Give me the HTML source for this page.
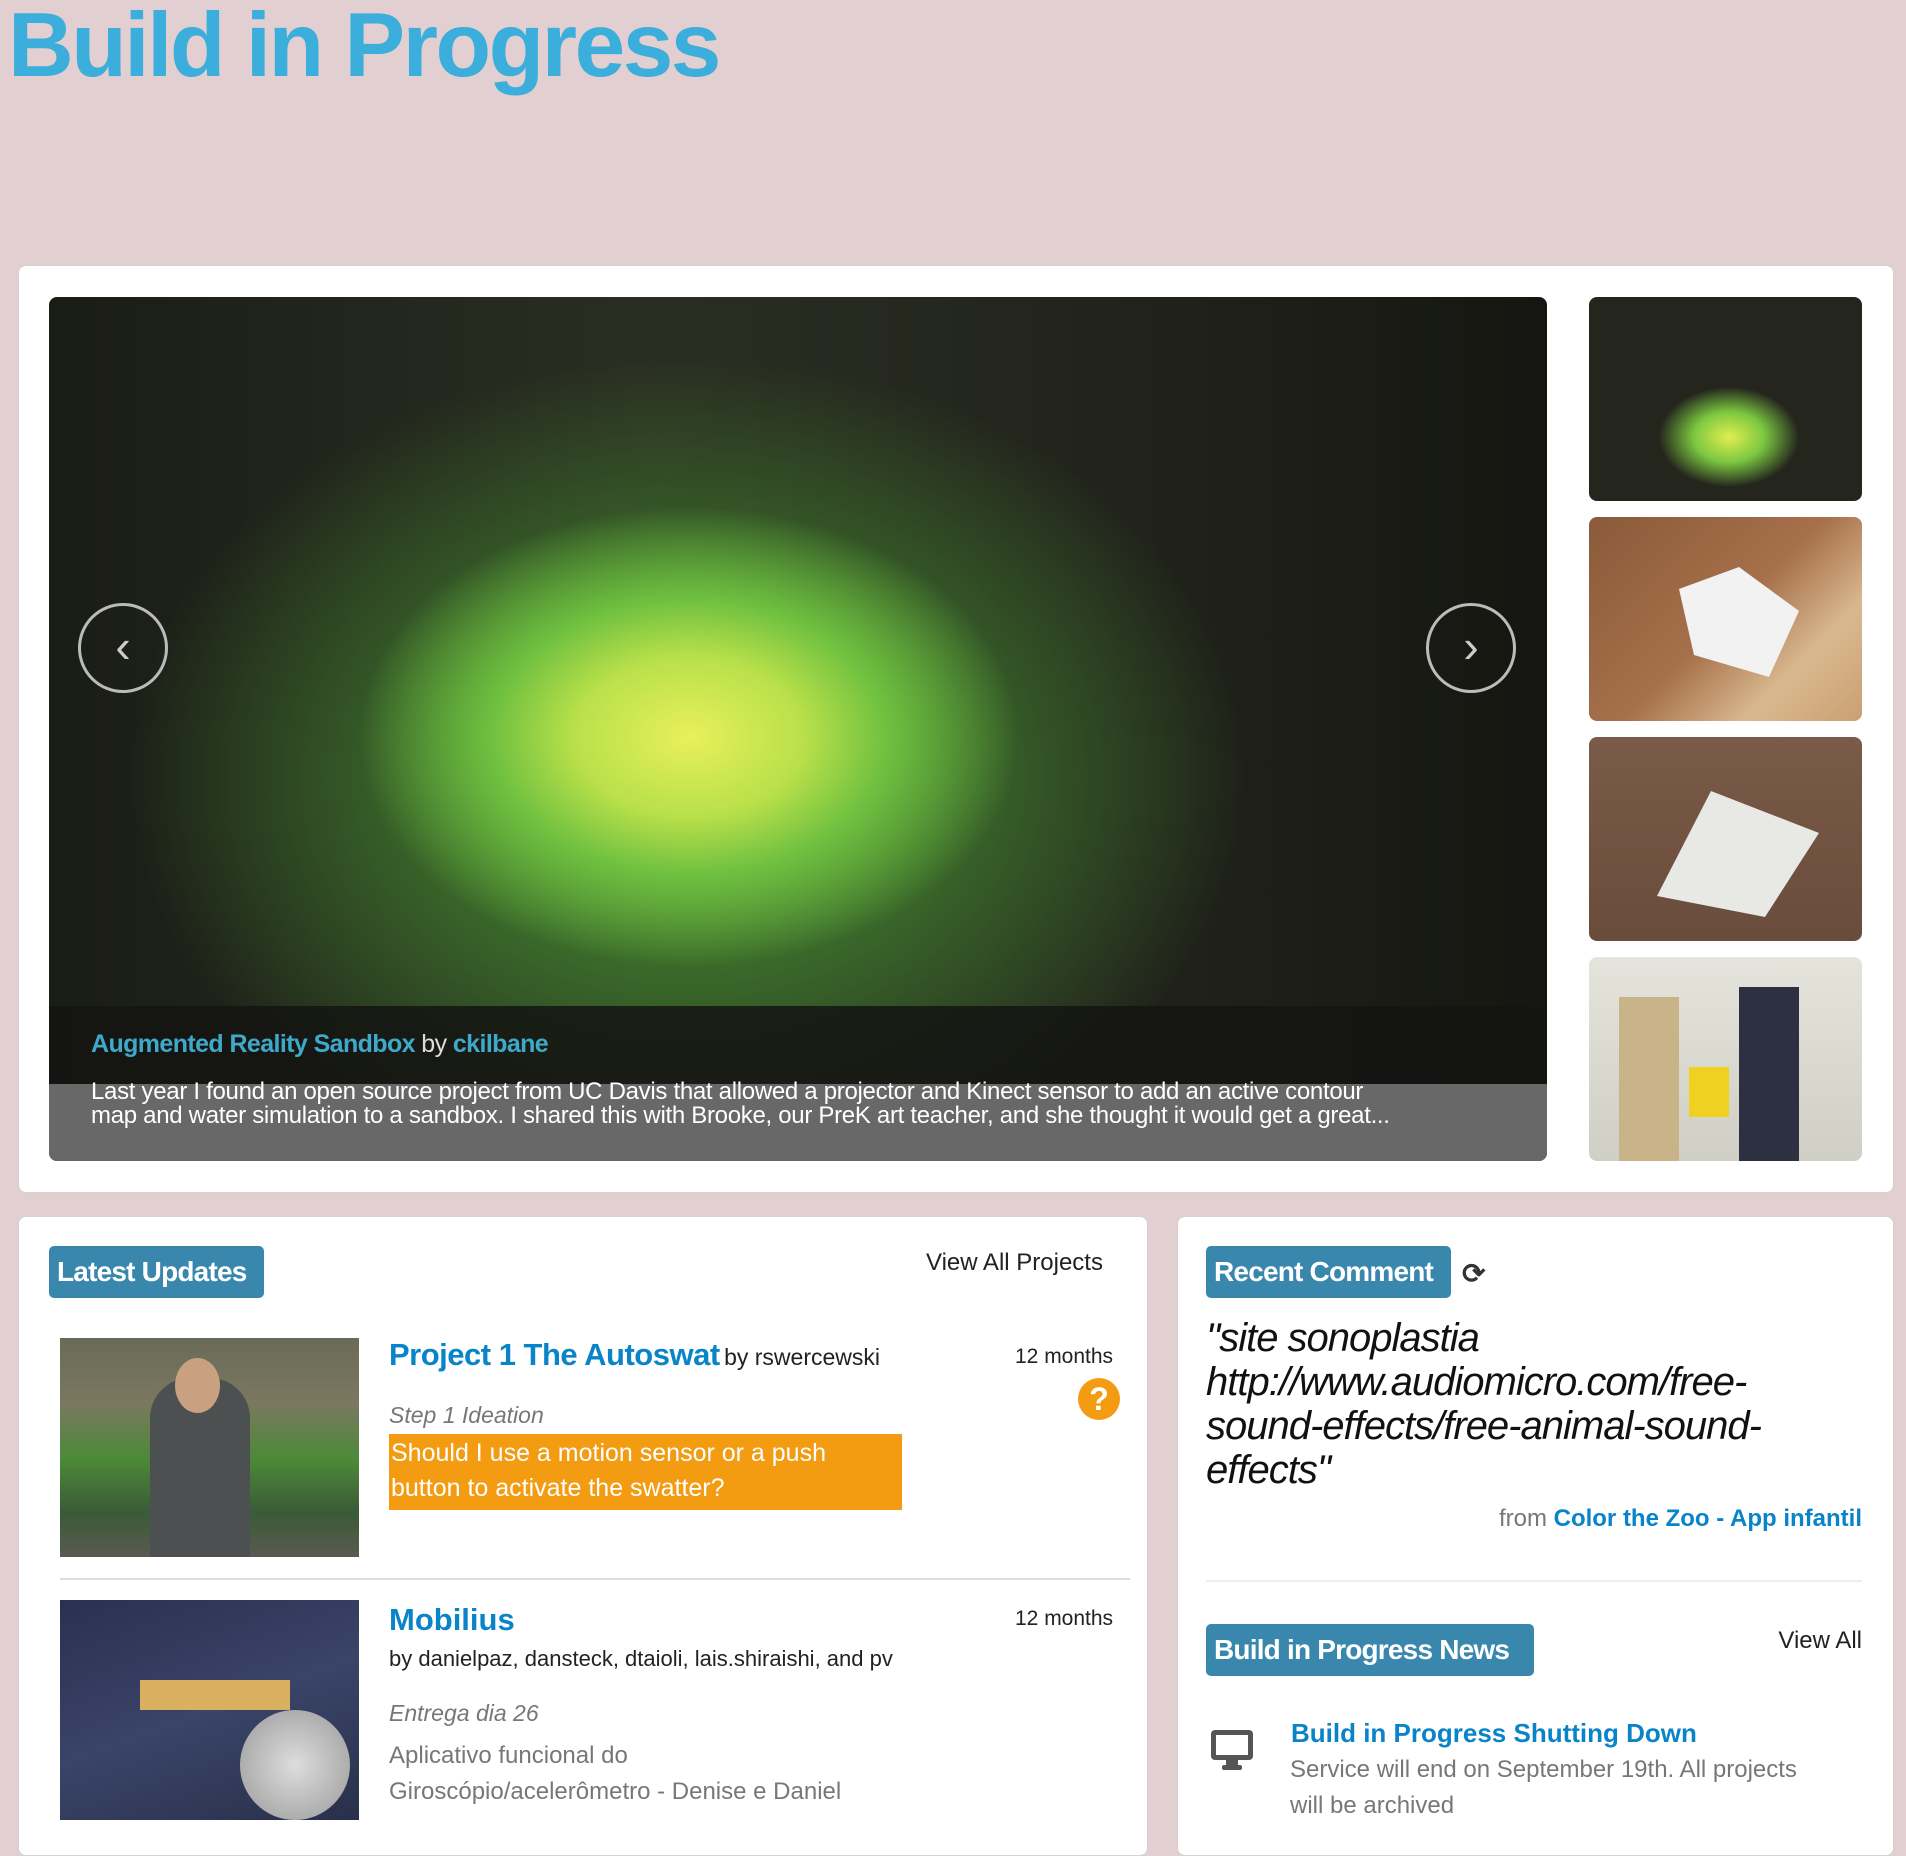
<!DOCTYPE html>
<html><head><meta charset="utf-8"><style>
*{margin:0;padding:0;box-sizing:border-box}
body{width:1906px;height:1824px;background:#e2cfd1;font-family:"Liberation Sans",sans-serif;position:relative;overflow:hidden}
.a{position:absolute}
h1{position:absolute;left:8px;top:-6px;font-size:91px;font-weight:bold;color:#3caedc;letter-spacing:-2.5px;white-space:nowrap}
.card{position:absolute;background:#fff;border-radius:8px;border:1px solid #d6d0d0}
.badge{position:absolute;background:#3a87ad;color:#fff;font-weight:bold;font-size:28px;border-radius:5px;padding:0 8px;height:52px;line-height:52px;letter-spacing:-0.8px;white-space:nowrap}
.arrow{position:absolute;width:90px;height:90px;border:3px solid #bbb;border-radius:50%;color:#ccc;font-size:46px;text-align:center;line-height:80px;font-weight:100}
.thumb{position:absolute;left:1589px;width:273px;height:204px;border-radius:8px;overflow:hidden}
.blue{color:#0a84c9;font-weight:bold}
.gray{color:#777}
</style></head><body>
<h1>Build in Progress</h1>

<div class="card" style="left:18px;top:265px;width:1876px;height:928px"></div>
<div class="a" style="left:49px;top:297px;width:1498px;height:864px;border-radius:8px;overflow:hidden;background:
radial-gradient(ellipse 330px 230px at 640px 440px,#e8f05a 0%,#b8e04a 35%,#6fc040 60%,rgba(60,120,40,0) 100%),
radial-gradient(ellipse 560px 420px at 640px 480px,#5a9a3a 0%,#3a6a2a 45%,rgba(30,40,25,0) 100%),
linear-gradient(90deg,#1a1d16 0%,#2a2e22 40%,#22241c 70%,#151611 100%)">
  <div class="a" style="left:0;top:709px;width:1498px;height:78px;background:rgba(20,20,18,.85)"></div>
  <div class="a" style="left:0;top:787px;width:1498px;height:77px;background:#686868"></div>
  <div class="a" style="left:42px;top:733px;font-size:25px;font-weight:bold;color:#3fa9c9;letter-spacing:-0.6px;white-space:nowrap">Augmented Reality Sandbox <span style="color:#ddd;font-weight:normal">by</span> ckilbane</div>
  <div class="a" style="left:42px;top:783px;width:1320px;font-size:24px;line-height:24px;color:#fff;letter-spacing:-0.3px">Last year I found an open source project from UC Davis that allowed a projector and Kinect sensor to add an active contour map and water simulation to a sandbox. I shared this with Brooke, our PreK art teacher, and she thought it would get a great...</div>
</div>
<div class="arrow" style="left:78px;top:603px">‹</div>
<div class="arrow" style="left:1426px;top:603px">›</div>

<div class="thumb" style="top:297px;background:radial-gradient(ellipse 70px 50px at 140px 140px,#e0ee50,#7cc840 50%,rgba(40,60,30,0) 100%),#24261e"></div>
<div class="thumb" style="top:517px;background:linear-gradient(135deg,#8a5a3a 0%,#a6704a 50%,#d9b890 75%,#caa070 100%)"><div class="a" style="left:60px;top:50px;width:150px;height:110px;background:#f2f2f2;clip-path:polygon(20% 20%,60% 0,100% 40%,80% 100%,30% 80%)"></div></div>
<div class="thumb" style="top:737px;background:linear-gradient(180deg,#7a5a48,#6a4c3c)"><div class="a" style="left:50px;top:40px;width:180px;height:140px;background:#e8e8e4;clip-path:polygon(40% 10%,100% 40%,70% 100%,10% 85%)"></div></div>
<div class="thumb" style="top:957px;background:linear-gradient(180deg,#e4e4dc,#cfcfc6)"><div class="a" style="left:30px;top:40px;width:60px;height:164px;background:#c9b48a"></div><div class="a" style="left:150px;top:30px;width:60px;height:174px;background:#2c3040"></div><div class="a" style="left:100px;top:110px;width:40px;height:50px;background:#f0d020"></div></div>

<!-- left card -->
<div class="card" style="left:18px;top:1216px;width:1130px;height:640px"></div>
<div class="badge" style="left:49px;top:1246px;width:215px">Latest Updates</div>
<div class="a" style="left:926px;top:1249px;font-size:24px;color:#222">View All Projects</div>

<div class="a" style="left:60px;top:1338px;width:299px;height:219px;background:linear-gradient(180deg,#6a6a58 0%,#7a7860 30%,#4c8a38 55%,#3a5a38 80%,#5a5a50 100%)"><div class="a" style="left:90px;top:40px;width:100px;height:179px;background:#4c5050;border-radius:40px 40px 0 0"></div><div class="a" style="left:115px;top:20px;width:45px;height:55px;background:#c9a080;border-radius:50%"></div></div>
<div class="a" style="left:389px;top:1337px;white-space:nowrap"><span class="blue" style="font-size:31px;letter-spacing:-0.5px">Project 1 The Autoswat</span> <span style="font-size:23px;color:#222">by rswercewski</span></div>
<div class="a" style="left:1015px;top:1345px;font-size:21px;color:#222">12 months</div>
<div class="a" style="left:1078px;top:1378px;width:42px;height:42px;border-radius:50%;background:#f39c12;color:#fff;font-weight:bold;font-size:32px;text-align:center;line-height:42px">?</div>
<div class="a gray" style="left:389px;top:1402px;font-size:23px;font-style:italic">Step 1 Ideation</div>
<div class="a" style="left:389px;top:1434px;width:513px;height:76px;background:#f39c12;color:#fff;font-size:25px;line-height:35px;padding:2px 40px 2px 2px">Should I use a motion sensor or a push button to activate the swatter?</div>
<div class="a" style="left:60px;top:1578px;width:1070px;height:2px;background:#ddd"></div>

<div class="a" style="left:60px;top:1600px;width:299px;height:220px;background:linear-gradient(160deg,#2a3050,#3a4468 50%,#28304a)"><div class="a" style="left:180px;top:110px;width:110px;height:110px;border-radius:50%;background:radial-gradient(circle,#ddd,#999)"></div><div class="a" style="left:80px;top:80px;width:150px;height:30px;background:#d8b060"></div></div>
<div class="a blue" style="left:389px;top:1602px;font-size:31px">Mobilius</div>
<div class="a" style="left:1015px;top:1607px;font-size:21px;color:#222">12 months</div>
<div class="a" style="left:389px;top:1646px;font-size:22px;color:#222">by danielpaz, dansteck, dtaioli, lais.shiraishi, and pv</div>
<div class="a gray" style="left:389px;top:1700px;font-size:23px;font-style:italic">Entrega dia 26</div>
<div class="a gray" style="left:389px;top:1738px;font-size:24px;line-height:36px;width:460px">Aplicativo funcional do Giroscópio/acelerômetro - Denise e Daniel</div>

<!-- right card -->
<div class="card" style="left:1177px;top:1216px;width:717px;height:640px"></div>
<div class="badge" style="left:1206px;top:1246px;width:245px">Recent Comment</div>
<div class="a" style="left:1462px;top:1257px;font-size:28px;color:#333;font-weight:bold">⟳</div>
<div class="a" style="left:1206px;top:1316px;width:610px;font-size:40px;line-height:44px;font-style:italic;color:#111;letter-spacing:-1px">"site sonoplastia http://www.audiomicro.com/free-sound-effects/free-animal-sound-effects"</div>
<div class="a" style="right:44px;top:1505px;font-size:24px;white-space:nowrap"><span class="gray">from </span><span class="blue">Color the Zoo - App infantil</span></div>
<div class="a" style="left:1206px;top:1580px;width:656px;height:2px;background:#eee"></div>
<div class="badge" style="left:1206px;top:1624px;width:328px">Build in Progress News</div>
<div class="a" style="right:44px;top:1627px;font-size:24px;color:#222">View All</div>
<svg class="a" style="left:1209px;top:1728px" width="46" height="43" viewBox="0 0 46 43"><rect x="2" y="2" width="42" height="30" rx="4" fill="#555"/><rect x="7" y="7" width="32" height="20" fill="#fff"/><rect x="17" y="32" width="12" height="6" fill="#555"/><rect x="13" y="37" width="20" height="5" rx="2" fill="#555"/></svg>
<div class="a blue" style="left:1291px;top:1718px;font-size:26px">Build in Progress Shutting Down</div>
<div class="a gray" style="left:1290px;top:1752px;width:530px;font-size:24px;line-height:36px">Service will end on September 19th. All projects will be archived</div>
</body></html>
